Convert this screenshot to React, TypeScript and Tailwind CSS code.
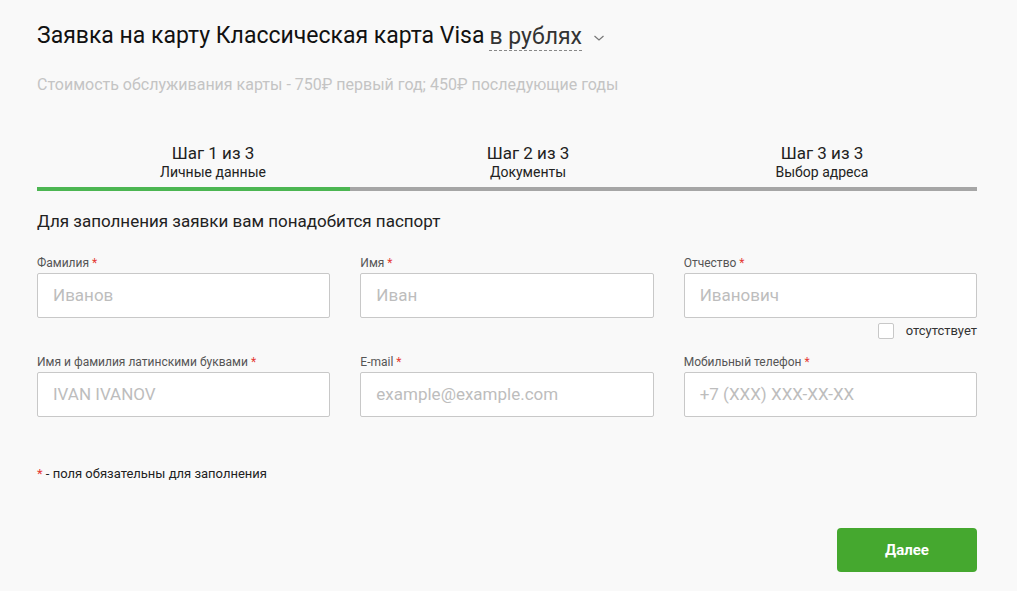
import React from "react";

const Req = () => <span className="text-[#e53935]"> *</span>;

function Field({ label, placeholder }: { label: string; placeholder: string }) {
  return (
    <div className="flex flex-col">
      <label className="text-[12px] leading-[14px] text-[#555] mb-[3px]">
        {label}
        <Req />
      </label>
      <div className="h-[45px] border border-[#c8c8c8] rounded-[2px] bg-white flex items-center px-[15px] text-[17px] text-[#bdbdbd]">
        {placeholder}
      </div>
    </div>
  );
}

export default function App() {
  return (
    <div
      className="w-[1017px] h-[591px] bg-[#f9f9f9] text-[#222] overflow-hidden"
      style={{ fontFamily: "Roboto, 'Noto Sans', sans-serif" }}
    >
      <div className="w-[940px] ml-[37px] pt-[20px]">
        <div className="flex items-center text-[23px] leading-[30px] text-[#111]">
          <span>Заявка на карту Классическая карта Visa</span>
          <span className="ml-[5px] border-b border-dashed border-[#888] leading-[26px] pt-[4px] text-[#333]">
            в рублях
          </span>
          <svg width="12" height="8" viewBox="0 0 12 8" className="ml-[11px] mt-[4px]">
            <path d="M1.5 2 L6 6 L10.5 2" fill="none" stroke="#777" strokeWidth="1.2" />
          </svg>
        </div>
        <div className="mt-[24px] text-[16px] leading-[20px] text-[#c4c4c4]">
          Стоимость обслуживания карты - 750₽ первый год; 450₽ последующие годы
        </div>

        <div className="mt-[49px] grid grid-cols-[352px_278px_310px] text-center">
          <div>
            <div className="text-[17px] leading-[18px] text-[#222]">Шаг 1 из 3</div>
            <div className="text-[14px] leading-[18px] text-[#222] mt-[1px]">Личные данные</div>
          </div>
          <div>
            <div className="text-[17px] leading-[18px] text-[#222]">Шаг 2 из 3</div>
            <div className="text-[14px] leading-[18px] text-[#222] mt-[1px]">Документы</div>
          </div>
          <div>
            <div className="text-[17px] leading-[18px] text-[#222]">Шаг 3 из 3</div>
            <div className="text-[14px] leading-[18px] text-[#222] mt-[1px]">Выбор адреса</div>
          </div>
        </div>
        <div className="mt-[6px] flex h-[4px]">
          <div className="w-[313px] bg-[#4cb652]" />
          <div className="flex-1 bg-[#a6a6a6]" />
        </div>

        <div className="mt-[20px] text-[17px] leading-[20px] text-[#222]">
          Для заполнения заявки вам понадобится паспорт
        </div>

        <div className="mt-[25px] grid grid-cols-3 gap-x-[30px]">
          <Field label="Фамилия" placeholder="Иванов" />
          <Field label="Имя" placeholder="Иван" />
          <Field label="Отчество" placeholder="Иванович" />
        </div>
        <div className="flex justify-end items-center h-[26px]">
          <div className="w-[16px] h-[16px] border border-[#c8c8c8] rounded-[2px] bg-white" />
          <span className="ml-[12px] text-[13px] text-[#333]">отсутствует</span>
        </div>
        <div className="mt-[11px] grid grid-cols-3 gap-x-[30px]">
          <Field label="Имя и фамилия латинскими буквами" placeholder="IVAN IVANOV" />
          <Field label="E-mail" placeholder="example@example.com" />
          <Field label="Мобильный телефон" placeholder="+7 (XXX) XXX-XX-XX" />
        </div>

        <div className="mt-[49px] text-[13px] leading-[16px] text-[#222]">
          <span className="text-[#e53935]">*</span> - поля обязательны для заполнения
        </div>

        <div className="mt-[46px] flex justify-end">
          <button className="w-[140px] h-[44px] rounded-[4px] bg-[#45a82f] text-white font-bold text-[15px]">
            Далее
          </button>
        </div>
      </div>
    </div>
  );
}
